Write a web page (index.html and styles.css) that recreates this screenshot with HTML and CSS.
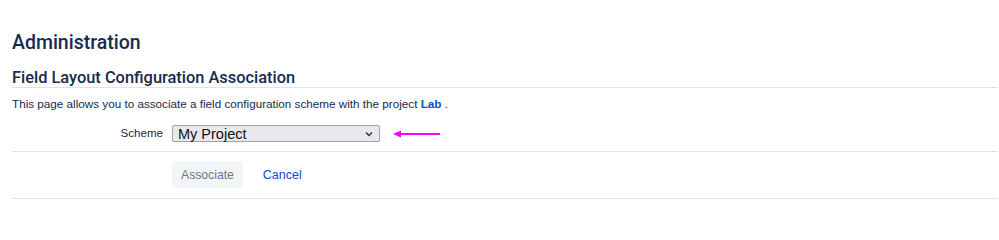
FILE: index.html
```html
<!DOCTYPE html>
<html>
<head>
<meta charset="utf-8">
<link rel="stylesheet" href="styles.css">
</head>
<body>
<div class="page">
  <h1 class="title">Administration</h1>
  <h2 class="subtitle">Field Layout Configuration Association</h2>
  <p class="desc">This page allows you to associate a field configuration scheme with the project <a class="proj" href="#">Lab</a> .</p>
  <div class="row">
    <label class="label">Scheme</label>
    <div class="select">
      <span>My Project</span>
      <svg class="chev" width="8" height="6" viewBox="0 0 8 6"><path d="M1 1.5 L4 4.5 L7 1.5" fill="none" stroke="#333" stroke-width="1.4"/></svg>
    </div>
    <svg class="arrow" width="48" height="10" viewBox="0 0 48 10"><path d="M0 5 L8 1.5 L8 8.5 Z" fill="#f0f"/><path d="M6 5 H47" stroke="#f0f" stroke-width="2.2"/></svg>
  </div>
  <div class="buttons">
    <button class="btn">Associate</button>
    <a class="cancel" href="#">Cancel</a>
  </div>
</div>
</body>
</html>
```
FILE: styles.css
```css
html, body { margin: 0; padding: 0; background: #fff; }
body { font-family: "Liberation Sans", Arial, sans-serif; color: #172b4d; }
.page { padding: 30px 1px 0 12px; }
.title { margin: 0; font-family: Roboto, "Liberation Sans", sans-serif; font-size: 19.5px; line-height: 26px; font-weight: 500; color: #172b4d; }
.subtitle { margin: 12px 0 0; font-family: Roboto, "Liberation Sans", sans-serif; font-size: 16.4px; line-height: 19px; font-weight: 500; color: #172b4d; border-bottom: 1px solid #dfe1e6; }
.desc { margin: 8px 0 0; font-size: 11.7px; line-height: 16px; color: #172b4d; }
.proj { color: #0052cc; font-weight: bold; text-decoration: none; }
.row { display: flex; align-items: center; padding: 13px 0 9px; border-bottom: 1px solid #dfe1e6; }
.label { width: 151px; text-align: right; font-size: 11.6px; margin-right: 9px; color: #172b4d; position: relative; top: -1px; }
.select { width: 208px; height: 17px; box-sizing: border-box; background: #e9e9ed; border: 1px solid #a0a0a6; border-radius: 2px; display: flex; align-items: center; justify-content: space-between; padding: 0 6px 0 5px; font-size: 14.5px; color: #111; }
.chev { margin-top: 1px; }
.arrow { margin-left: 13px; }
.buttons { display: flex; align-items: center; padding: 9px 0 10px 160px; border-bottom: 1px solid #dfe1e6; }
.btn { height: 27px; padding: 0 9px; border: none; border-radius: 3px; background: #f4f5f7; color: #6b778c; font-family: "Liberation Sans", Arial, sans-serif; font-size: 12.2px; }
.cancel { margin-left: 20px; color: #0052cc; text-decoration: none; font-size: 12.5px; }
```
